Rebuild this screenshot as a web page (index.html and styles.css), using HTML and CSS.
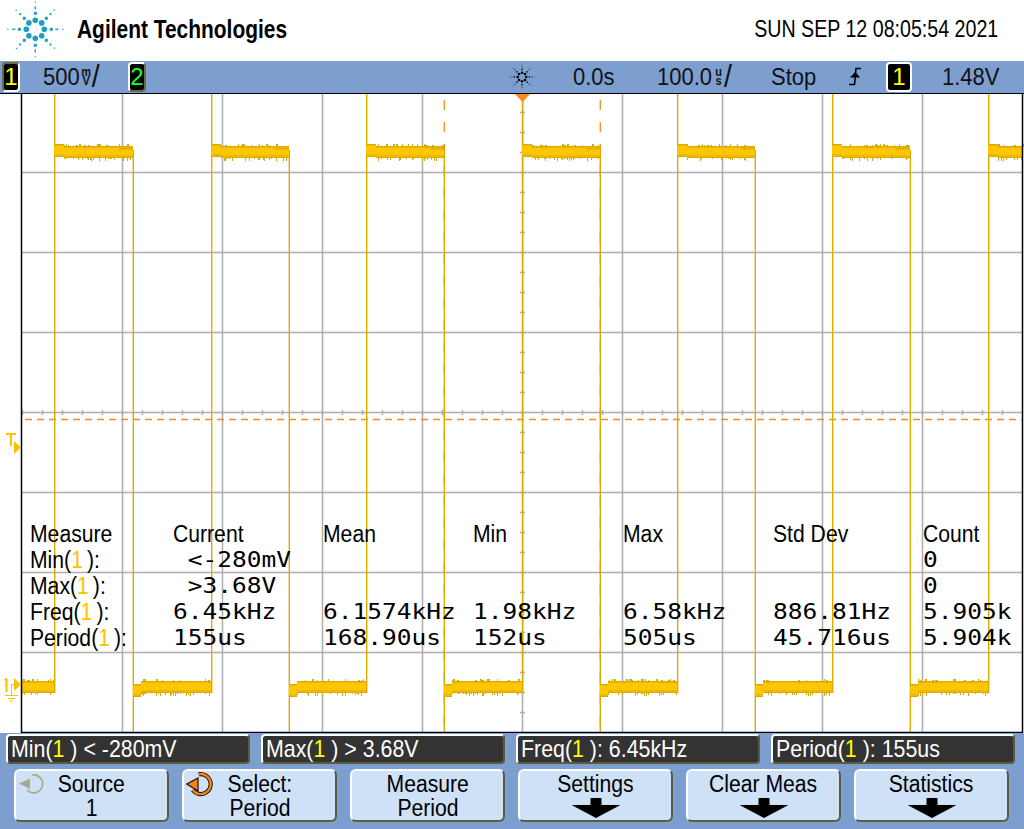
FILE: index.html
```html
<!DOCTYPE html>
<html lang="en">
<head>
    <meta charset="UTF-8">
    <meta name="viewport" content="width=device-width, initial-scale=1.0">
    <title>Agilent Technologies scope capture</title>
    <link rel="stylesheet" href="styles.css">
</head>
<body>

<svg class="defs" width="0" height="0">
    <defs>
        <g id="ray-axis">
            <circle cx="0" cy="-9" r="2.8"/>
            <rect x="-1.5" y="-17.5" width="3" height="3"/>
            <rect x="-0.7" y="-23" width="1.4" height="3"/>
            <rect x="-0.6" y="-28" width="1.2" height="1.2"/>
        </g>
        <g id="ray-diag">
            <circle cx="6.4" cy="-6.4" r="2.8"/>
            <rect x="9.5" y="-12.5" width="3" height="3"/>
            <rect x="14.2" y="-16.2" width="2" height="2"/>
            <rect x="18.2" y="-19.8" width="1.3" height="1.3"/>
        </g>
        <g id="spark">
            <use href="#ray-axis"/>
            <use href="#ray-axis" transform="rotate(90)"/>
            <use href="#ray-axis" transform="rotate(180)"/>
            <use href="#ray-axis" transform="rotate(270)"/>
            <use href="#ray-diag"/>
            <use href="#ray-diag" transform="rotate(90)"/>
            <use href="#ray-diag" transform="rotate(180)"/>
            <use href="#ray-diag" transform="rotate(270)"/>
        </g>
    </defs>
</svg>

<header class="brand">
    <svg class="logo" width="70" height="60" viewBox="0 0 70 60"><use href="#spark" transform="translate(35.3 28.3)"/></svg>
    <span class="brand-name">Agilent Technologies</span>
    <span class="clock">SUN SEP 12 08:05:54 2021</span>
</header>

<div class="status">
    <span class="chan chan-one">1</span>
    <span class="scale scale-volt">500<span class="unit"><i>m</i><i>V</i></span><span class="slash">/</span></span>
    <span class="chan chan-two">2</span>
    <svg class="spark-icon" width="28" height="30" viewBox="0 0 28 30"><use href="#spark" transform="translate(14 15) scale(.47)"/></svg>
    <span class="scale scale-delay">0.0s</span>
    <span class="scale scale-time">100.0<span class="unit"><i>u</i><i>s</i></span><span class="slash">/</span></span>
    <span class="scale scale-stop">Stop</span>
    <svg class="edge-icon" width="14" height="20" viewBox="0 0 14 20">
        <path d="M1 17.500h5.500L8 1.500h5" fill="none" stroke="#000" stroke-width="1.600"/>
        <path d="M2 10.500L7.200 5l5 5.500z" fill="#000"/>
    </svg>
    <span class="chan chan-trig">1</span>
    <span class="scale scale-level">1.48V</span>
</div>

<main class="plot">
    <svg id="scope" class="scope" width="1024" height="639" viewBox="0 94 1024 639">
        <g class="grid">
            <path d="M122.500 94V732M222.500 94V732M322.500 94V732M422.500 94V732M622.500 94V732M722.500 94V732M822.500 94V732M922.500 94V732"/>
            <path d="M522.500 94V732"/>
            <path d="M22 172.500H1022M22 252.500H1022M22 332.500H1022M22 412.500H1022M22 492.500H1022M22 572.500H1022M22 652.500H1022"/>
        </g>
        <g id="ticks" class="grid"></g>
        <path class="cursor" d="M25 419.500H1022"/>
        <path class="cursor" d="M444.300 100V732M600.300 100V732"/>
        <g id="trace"></g>
        <path class="frame" d="M21.500 94V732.500H1022.500V94"/>
        <path class="trig-mark" d="M515 94H530L522.500 102z"/>
        <g class="marker">
            <path d="M6 433h10v2h-4v11h-2v-11h-4z"/>
            <path d="M14 441L21 447.500L14 454z"/>
            <path d="M4 680l2-2h1.500v14h-2v-11z"/>
            <path d="M14 678L21 684.500L14 691z"/>
            <path d="M11 684h3v1h-2v10h-1z"/>
            <path d="M5 695h13v1h-13zM8 698h7v1h-7zM10 700.500h3v1h-3z"/>
        </g>
    </svg>

    <div class="measure">
        <span class="head">Measure</span><span class="head">Current</span><span class="head">Mean</span><span class="head">Min</span><span class="head">Max</span><span class="head">Std Dev</span><span class="head">Count</span>

        <span class="head">Min(<b>1</b> ):</span><span class="val"> &lt;-280mV</span><span></span><span></span><span></span><span></span><span class="val">0</span>

        <span class="head">Max(<b>1</b> ):</span><span class="val"> &gt;3.68V</span><span></span><span></span><span></span><span></span><span class="val">0</span>

        <span class="head">Freq(<b>1</b> ):</span><span class="val">6.45kHz</span><span class="val">6.1574kHz</span><span class="val">1.98kHz</span><span class="val">6.58kHz</span><span class="val">886.81Hz</span><span class="val">5.905k</span>

        <span class="head">Period(<b>1</b> ):</span><span class="val">155us</span><span class="val">168.90us</span><span class="val">152us</span><span class="val">505us</span><span class="val">45.716us</span><span class="val">5.904k</span>
    </div>
</main>

<footer class="panel">
    <div class="readouts">
        <div class="readout"><span>Min(<b>1</b> ) &lt; -280mV</span></div>
        <div class="readout"><span>Max(<b>1</b> ) &gt; 3.68V</span></div>
        <div class="readout"><span>Freq(<b>1</b> ): 6.45kHz</span></div>
        <div class="readout"><span>Period(<b>1</b> ): 155us</span></div>
    </div>
    <div class="softkeys">
        <div class="key">
            <svg class="knob" width="30" height="30" viewBox="0 0 30 30">
                <path d="M14 5A9 9 0 1 1 9 20" fill="none" stroke="#a9a98c" stroke-width="1.600"/>
                <path d="M1 13.500L12 8.500V19z" fill="#a9a98c"/>
            </svg>
            <span>Source</span><span>1</span>
        </div>
        <div class="key">
            <svg class="knob" width="30" height="30" viewBox="0 0 30 30">
                <path d="M12.700 4.300A10 10 0 1 1 6.700 20" fill="none" stroke="#111" stroke-width="4.200"/>
                <path d="M.8 14L12 8V21z" fill="#ff7f0f" stroke="#111" stroke-width="1.200"/>
                <path d="M12.700 4.300A10 10 0 1 1 6.700 20" fill="none" stroke="#ff7f0f" stroke-width="2.400"/>
            </svg>
            <span>Select:</span><span>Period</span>
        </div>
        <div class="key"><span>Measure</span><span>Period</span></div>
        <div class="key"><span>Settings</span><svg class="down" width="50" height="20" viewBox="0 0 50 20"><path d="M19.500 0h11v7h19l-24.500 13L.5 7h19z"/></svg></div>
        <div class="key"><span>Clear Meas</span><svg class="down" width="50" height="20" viewBox="0 0 50 20"><path d="M19.500 0h11v7h19l-24.500 13L.5 7h19z"/></svg></div>
        <div class="key"><span>Statistics</span><svg class="down" width="50" height="20" viewBox="0 0 50 20"><path d="M19.500 0h11v7h19l-24.500 13L.5 7h19z"/></svg></div>
    </div>
</footer>

<script src="wave.js"></script>
</body>
</html>
```

FILE: styles.css
```css
/* the scope font is tall and narrow, so text is set large and squeezed with scaleX */
body {
    margin: 0;
    width: 1024px;
    height: 829px;
    overflow: hidden;
    background: #fff;
    color: #000;
    font-family: "Liberation Sans", Arial, sans-serif;
    font-size: 24px;
}
.defs {
    position: absolute;
}
.logo {
    fill: #1c9fc3;
    flex: none;
}
.brand {
    height: 61px;
    display: flex;
    align-items: center;
}
.brand-name {
    margin-left: 7px;
    margin-top: -2px;
    font-size: 26px;
    font-weight: bold;
    transform: scaleX(.805);
    transform-origin: left;
}
.clock {
    margin-left: auto;
    margin-right: 26px;
    margin-top: -2px;
    font-size: 23.5px;
    transform: scaleX(.835);
    transform-origin: right;
}

/* top status strip */
.status {
    height: 32px;
    background: #7c9fcf;
    display: flex;
    align-items: center;
    color: #111;
    border-bottom: 1px solid #000;
    box-sizing: content-box;
}
.chan {
    width: 18px;
    height: 30px;
    box-sizing: border-box;
    border: 2px solid #fff;
    border-radius: 4px;
    background: #000;
    color: #ff0;
    line-height: 26px;
    text-align: center;
    flex: none;
}
.chan-one {
    margin-left: 2px;
    border-left-color: #6e6a4a;
    border-top-color: #6e6a4a;
}
.chan-two {
    color: #2f2;
    border-right-color: #6e6a4a;
    border-bottom-color: #6e6a4a;
}
.chan-trig {
    width: 26px;
}
.scale {
    display: flex;
    align-items: center;
    flex: none;
    transform: scaleX(.917);
    transform-origin: left;
}
.scale-volt {
    margin-left: 23px;
    width: 85px;
}
.spark-icon {
    margin-left: 362px;
    flex: none;
}
.scale-delay {
    margin-left: 37px;
    width: 84px;
}
.scale-time {
    width: 114px;
}
.scale-stop {
    width: 77px;
}
.edge-icon {
    width: 14px;
    margin-right: 24px;
    flex: none;
}
.scale-level {
    margin-left: 30px;
}
.unit {
    display: inline-flex;
    flex-direction: column;
    width: 12px;
    margin-left: 1px;
    font-size: 12px;
    font-weight: bold;
    line-height: 9px;
    text-align: center;
}
.unit i {
    font-style: normal;
}
.slash {
    font-size: 31px;
}

/* plot */
.plot {
    position: relative;
    height: 639px;
}
.scope {
    display: block;
}
.grid path {
    fill: none;
    stroke: #adadad;
    stroke-width: 1.5;
}
.cursor {
    fill: none;
    stroke: #fa8c1e;
    stroke-width: 1.3;
    stroke-dasharray: 7 5;
}
.cursor + .cursor {
    stroke-dasharray: 10 12;
}
.frame {
    fill: none;
    stroke: #000;
    stroke-width: 1.5;
}
.trig-mark {
    fill: #fb8a1a;
}
.marker path {
    fill: #fcc200;
}

/* measurement table sits over the traces */
.measure {
    position: absolute;
    left: 30px;
    top: 427px;
    display: grid;
    grid-template-columns: 143px repeat(5, 150px) 90px;
    grid-auto-rows: 26px;
    line-height: 26px;
    white-space: pre;
}
.head {
    font-size: 23.5px;
    transform: scaleX(.9);
    transform-origin: left;
}
.head b {
    margin-right: -2px;
    font-weight: normal;
    color: #fcc200;
}
.val {
    font-family: "DejaVu Sans Mono", "Liberation Mono", monospace;
    font-size: 22px;
    transform: scaleX(1.113);
    transform-origin: left;
}

/* bottom panel */
.panel {
    height: 96px;
    background: #7c9fcf;
    padding: 1px 0 0;
    box-sizing: border-box;
}
.readouts {
    display: flex;
    gap: 11px;
    padding-left: 6px;
}
.readout {
    width: 244px;
    height: 30px;
    box-sizing: border-box;
    padding-left: 3px;
    background: #333;
    color: #fff;
    border: 2px solid;
    border-color: #fff #5e5a3c #5e5a3c #fff;
    border-radius: 4px;
    line-height: 25px;
    white-space: nowrap;
}
.readout span {
    display: block;
    transform: scaleX(.89);
    transform-origin: left;
}
.readout b {
    font-weight: normal;
    color: #ff0;
}
.softkeys {
    display: flex;
    gap: 13px;
    padding: 5px 0 0 14px;
}
.key {
    position: relative;
    width: 155px;
    height: 53px;
    box-sizing: border-box;
    background: #cfe1f7;
    border: 2px solid;
    border-color: #fff #5e5a3c #5e5a3c #fff;
    border-radius: 6px;
    display: flex;
    flex-direction: column;
    align-items: center;
    padding-top: 1px;
    font-size: 23.5px;
    line-height: 24px;
}
.key span {
    transform: scaleX(.9);
}
.knob {
    position: absolute;
    left: 2px;
    top: -1px;
}
.down {
    display: block;
    margin-top: 2px;
}
```

FILE: wave.js
```js
// draws the captured trace and the centre axis ticks into the scope svg
const NS = 'http://www.w3.org/2000/svg';
const trace = document.getElementById('trace');
const ticks = document.getElementById('ticks');

let seed = 20210912;
function rnd() {
    seed = (seed * 1664525 + 1013904223) % 4294967296;
    return seed / 4294967296;
}

function box(x, y, w, h, fill) {
    const r = document.createElementNS(NS, 'rect');
    r.setAttribute('x', x);
    r.setAttribute('y', y);
    r.setAttribute('width', w);
    r.setAttribute('height', h);
    r.setAttribute('fill', fill);
    trace.appendChild(r);
}

const EDGE = '#dcab00';
const MID = '#eeb900';
const CORE = '#fcc600';

function solid(a, b, y, h) {
    box(a, y, b - a, h, MID);
    box(a, y, b - a, 1, EDGE);
    box(a, y + h - 1, b - a, 1, EDGE);
    box(a, y + 2, b - a, h - 5, CORE);
}

function band(a, b, y, h) {
    solid(a, b, y, h);
    // noise above and below the band
    for (let x = a; x < b; x += 1 + Math.floor(rnd() * 3)) {
        if (rnd() < 0.4) box(x, y - 1 - Math.floor(rnd() * 2), 1 + Math.floor(rnd() * 2), 3, EDGE);
        if (rnd() < 0.45) box(x, y + h - 1, 1, 2 + Math.floor(rnd() * 3), EDGE);
    }
}

// high level: starts a little higher, ends a little lower
function high(a, b) {
    const end = Math.min(b, 1023);
    solid(a, a + 10, 144, 13);
    band(a + 10, end, 146, 12);
    if (b < 1023) solid(b - 14, b, 148, 10);
}

function low(a, b, first) {
    if (!first) solid(a, a + 8, 684, 13);
    band(first ? a : a + 8, b, 681, 12);
}

const rising = [54, 211, 366, 522, 677, 832, 988];
const falling = [133, 289, 444, 600, 755, 910];

rising.forEach(x => box(x, 94, 1.4, 599, EDGE));
falling.forEach(x => box(x - 0.4, 150, 1.4, 582, EDGE));

rising.forEach((x, i) => high(x, i < falling.length ? falling[i] : 1023));
low(22, 54, true);
falling.forEach((x, i) => low(x, i + 1 < rising.length ? rising[i + 1] : 987, false));

// centre axis ticks, one every 20px
let d = '';
for (let x = 22; x < 1022; x += 20) d += 'M' + (x + 0.5) + ' 410V415';
for (let y = 92; y < 732; y += 20) d += 'M520 ' + (y + 0.5) + 'H525';
const t = document.createElementNS(NS, 'path');
t.setAttribute('d', d);
ticks.appendChild(t);
```
